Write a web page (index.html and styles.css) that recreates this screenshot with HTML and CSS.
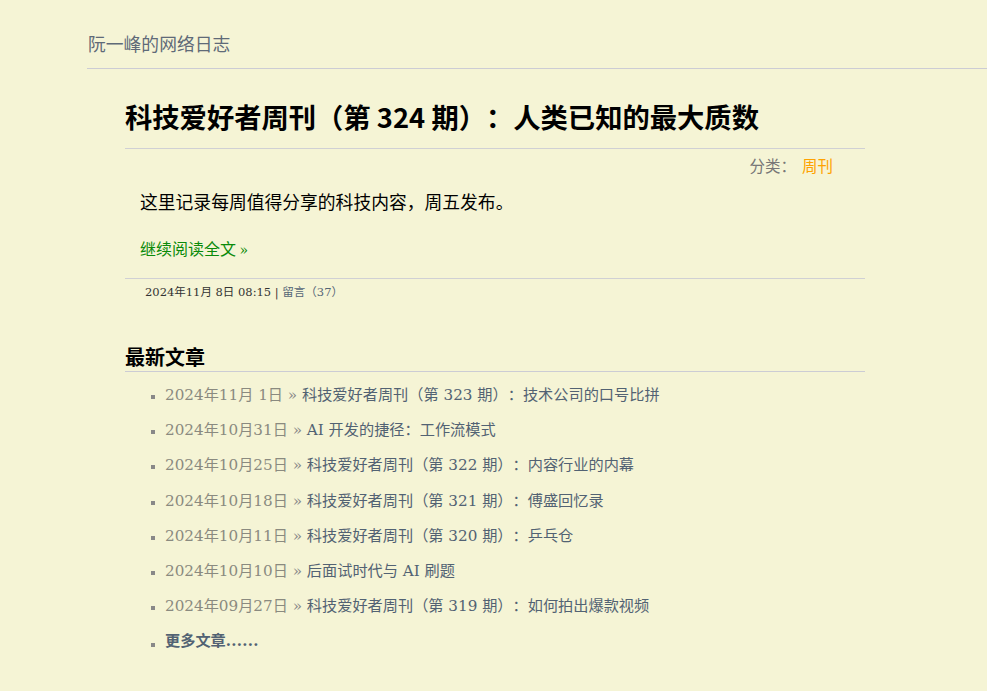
FILE: index.html
```html
<!DOCTYPE html>
<html lang="zh-CN">
<head>
<meta charset="utf-8">
<title>科技爱好者周刊（第 324 期）：人类已知的最大质数</title>
<link rel="stylesheet" href="styles.css">
</head>
<body>
<header class="site-header">
  <a class="site-title" href="#">阮一峰的网络日志</a>
</header>
<main class="content">
  <article class="entry">
    <h1 class="entry-title">科技爱好者周刊（第 324 期）：人类已知的最大质数</h1>
    <div class="entry-cat">分类：<a href="#" class="cat-link">周刊</a></div>
    <p class="entry-body">这里记录每周值得分享的科技内容，周五发布。</p>
    <p class="more"><a href="#">继续阅读全文 <span class="raquo">&raquo;</span></a></p>
    <div class="entry-meta">2024年11月 8日 08:15 | <a href="#">留言（37）</a></div>
  </article>
  <section class="recent">
    <h2 class="recent-title">最新文章</h2>
    <ul class="recent-list">
      <li><span class="date">2024年11月 1日</span> &raquo; <a href="#">科技爱好者周刊（第 323 期）：技术公司的口号比拼</a></li>
      <li><span class="date">2024年10月31日</span> &raquo; <a href="#">AI 开发的捷径：工作流模式</a></li>
      <li><span class="date">2024年10月25日</span> &raquo; <a href="#">科技爱好者周刊（第 322 期）：内容行业的内幕</a></li>
      <li><span class="date">2024年10月18日</span> &raquo; <a href="#">科技爱好者周刊（第 321 期）：傅盛回忆录</a></li>
      <li><span class="date">2024年10月11日</span> &raquo; <a href="#">科技爱好者周刊（第 320 期）：乒乓仓</a></li>
      <li><span class="date">2024年10月10日</span> &raquo; <a href="#">后面试时代与 AI 刷题</a></li>
      <li><span class="date">2024年09月27日</span> &raquo; <a href="#">科技爱好者周刊（第 319 期）：如何拍出爆款视频</a></li>
      <li><a href="#" class="more-posts">更多文章<span class="dots">......</span></a></li>
    </ul>
  </section>
</main>
</body>
</html>
```
FILE: styles.css
```css
html, body {
  margin: 0;
  padding: 0;
  background: #f5f4d5;
}
body {
  font-family: "Liberation Serif", "Noto Sans CJK SC", serif;
  color: #000;
  text-spacing-trim: space-all;
}
a {
  text-decoration: none;
}
.site-header {
  margin-left: 87px;
  padding: 30px 0 12px 1px;
  border-bottom: 1px solid #ccccd4;
}
.site-title {
  font-family: "Noto Sans CJK SC", sans-serif;
  font-size: 17.8px;
  line-height: 26px;
  color: #5f6a78;
  display: block;
}
.content {
  margin-left: 125px;
  width: 740px;
}
.entry-title {
  font-family: "Noto Sans CJK SC", sans-serif;
  font-size: 27.3px;
  font-weight: bold;
  margin: 0;
  padding-top: 25px;
  line-height: 44px;
  padding-bottom: 10px;
  border-bottom: 1px solid #d0d0d4;
}
.entry-cat {
  font-family: "Noto Sans CJK SC", sans-serif;
  font-size: 15.5px;
  color: #777;
  text-align: right;
  padding-right: 32px;
  line-height: 32px;
}
.cat-link {
  color: #ffa200;
  margin-left: 6px;
}
.entry-body {
  font-family: "Noto Sans CJK SC", sans-serif;
  font-size: 17.8px;
  margin: 0;
  padding-left: 15px;
  line-height: 28px;
  margin-top: 6px;
}
.more {
  font-family: "Noto Sans CJK SC", sans-serif;
  font-size: 16px;
  margin: 0;
  padding-left: 15px;
  line-height: 28px;
  margin-top: 19px;
  padding-bottom: 14px;
  border-bottom: 1px solid #d0d0d4;
}
.more a {
  color: #0a8a0a;
}
.raquo {
  font-family: "DejaVu Serif", serif;
  font-size: 14px;
}
.entry-meta {
  font-family: "DejaVu Serif", "Noto Sans CJK SC", serif;
  font-size: 11.5px;
  color: #333;
  padding-left: 20px;
  line-height: 26px;
}
.entry-meta a {
  color: #556677;
}
.recent {
  margin-top: 39px;
}
.recent-title {
  font-family: "Noto Sans CJK SC", sans-serif;
  font-size: 20px;
  font-weight: bold;
  margin: 0;
  line-height: 26px;
  border-bottom: 1px solid #ccccd4;
  padding-bottom: 1px;
}
.recent-list {
  margin: 0;
  padding: 6px 0 0 40px;
  list-style: square;
  font-family: "DejaVu Serif", "Noto Sans CJK SC", serif;
  font-size: 15.2px;
  color: #888;
}
.recent-list li {
  line-height: 35.2px;
}
.recent-list li::marker {
  color: #888;
  font-size: 12px;
}
.date {
  color: #8a8a80;
}
.recent-list a {
  color: #526273;
}
.more-posts {
  font-family: "Noto Sans CJK SC", sans-serif;
  font-weight: bold;
  position: relative;
  top: -2px;
}
.dots {
  font-family: "DejaVu Serif", serif;
  font-size: 15px;
  letter-spacing: 0.3px;
}
```
